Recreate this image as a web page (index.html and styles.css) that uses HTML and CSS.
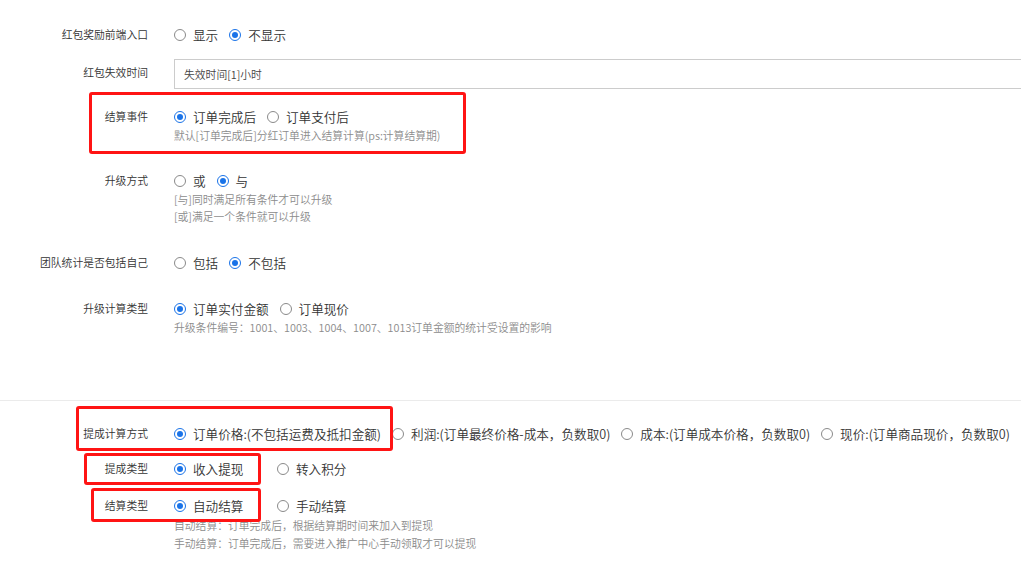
FILE: index.html
```html
<!DOCTYPE html>
<html lang="zh-CN">
<head>
<meta charset="utf-8">
<title>设置</title>
<link rel="stylesheet" href="styles.css">
</head>
<body>
<div class="page">
  <div class="row r1">
    <div class="label">红包奖励前端入口</div>
    <div class="field">
      <div class="opts">
        <span class="opt"><span class="radio"></span>显示</span>
        <span class="opt"><span class="radio on"></span>不显示</span>
      </div>
    </div>
  </div>

  <div class="row r2">
    <div class="label tall">红包失效时间</div>
    <div class="field">
      <div class="input">失效时间[1]小时</div>
    </div>
  </div>

  <div class="row r3">
    <div class="label">结算事件</div>
    <div class="field">
      <div class="opts">
        <span class="opt"><span class="radio on"></span>订单完成后</span>
        <span class="opt"><span class="radio"></span>订单支付后</span>
      </div>
      <div class="help">默认[订单完成后]分红订单进入结算计算(ps:计算结算期)</div>
    </div>
  </div>

  <div class="row r4">
    <div class="label">升级方式</div>
    <div class="field">
      <div class="opts">
        <span class="opt"><span class="radio"></span>或</span>
        <span class="opt"><span class="radio on"></span>与</span>
      </div>
      <div class="help">[与]同时满足所有条件才可以升级</div>
      <div class="help">[或]满足一个条件就可以升级</div>
    </div>
  </div>

  <div class="row r5">
    <div class="label">团队统计是否包括自己</div>
    <div class="field">
      <div class="opts">
        <span class="opt"><span class="radio"></span>包括</span>
        <span class="opt"><span class="radio on"></span>不包括</span>
      </div>
    </div>
  </div>

  <div class="row r6">
    <div class="label">升级计算类型</div>
    <div class="field">
      <div class="opts">
        <span class="opt"><span class="radio on"></span>订单实付金额</span>
        <span class="opt"><span class="radio"></span>订单现价</span>
      </div>
      <div class="help">升级条件编号：1001、1003、1004、1007、1013订单金额的统计受设置的影响</div>
    </div>
  </div>

  <div class="sep"></div>

  <div class="row r7">
    <div class="label">提成计算方式</div>
    <div class="field">
      <div class="opts">
        <span class="opt"><span class="radio on"></span>订单价格:(不包括运费及抵扣金额)</span>
        <span class="opt"><span class="radio"></span>利润:(订单最终价格-成本，负数取0)</span>
        <span class="opt"><span class="radio"></span>成本:(订单成本价格，负数取0)</span>
        <span class="opt"><span class="radio"></span>现价:(订单商品现价，负数取0)</span>
      </div>
    </div>
  </div>

  <div class="row r8">
    <div class="label">提成类型</div>
    <div class="field">
      <div class="opts">
        <span class="opt wide"><span class="radio on"></span>收入提现</span>
        <span class="opt"><span class="radio"></span>转入积分</span>
      </div>
    </div>
  </div>

  <div class="row r9">
    <div class="label">结算类型</div>
    <div class="field">
      <div class="opts">
        <span class="opt wide"><span class="radio on"></span>自动结算</span>
        <span class="opt"><span class="radio"></span>手动结算</span>
      </div>
      <div class="help h18">自动结算：订单完成后，根据结算期时间来加入到提现</div>
      <div class="help h18">手动结算：订单完成后，需要进入推广中心手动领取才可以提现</div>
    </div>
  </div>

  <div class="mark m1"></div>
  <div class="mark m2"></div>
  <div class="mark m3"></div>
  <div class="mark m4"></div>
</div>
</body>
</html>
```

FILE: styles.css
```css
html, body {
  margin: 0;
  padding: 0;
  background: #fff;
  overflow: hidden;
}
body {
  font-family: "Noto Sans CJK SC", "Liberation Sans", sans-serif;
  font-weight: 350;
  color: #333;
}
.page {
  position: relative;
  width: 1021px;
  height: 575px;
  padding-top: 25px;
  box-sizing: border-box;
}
.row {
  display: flex;
  align-items: flex-start;
}
.label {
  width: 148px;
  flex: none;
  text-align: right;
  font-size: 10.8px;
  line-height: 18px;
  color: #333;
  padding-right: 26px;
  box-sizing: content-box;
}
.label.tall {
  line-height: 26px;
}
.field {
  flex: 1;
  min-width: 0;
}
.opts {
  display: flex;
  align-items: center;
  height: 20px;
  white-space: nowrap;
}
.opt {
  display: inline-flex;
  align-items: center;
  font-size: 12.6px;
  line-height: 20px;
  color: #333;
  margin-right: 11px;
}
.opt.wide {
  width: 103px;
  margin-right: 0;
}
.radio {
  width: 12px;
  height: 12px;
  box-sizing: border-box;
  border: 1px solid #8a8a8a;
  border-radius: 50%;
  margin-right: 7px;
  flex: none;
  position: relative;
  background: #fff;
}
.radio.on {
  border: 1.5px solid #1a73e8;
}
.radio.on::after {
  content: "";
  position: absolute;
  left: 50%;
  top: 50%;
  width: 6px;
  height: 6px;
  margin: -3px 0 0 -3px;
  border-radius: 50%;
  background: #1a73e8;
}
.help {
  font-size: 10.8px;
  line-height: 17px;
  color: #8c8c8c;
  white-space: nowrap;
}
.help.h18 {
  line-height: 18px;
}
.input {
  width: 880px;
  height: 30px;
  box-sizing: border-box;
  border: 1px solid #ccc;
  padding-left: 9px;
  font-size: 10.8px;
  line-height: 28px;
  color: #444;
}
.r2 { margin-top: 14px; }
.r3 { margin-top: 18px; }
.r4 { margin-top: 27px; }
.r5 { margin-top: 28px; }
.r6 { margin-top: 26px; }
.sep {
  margin-top: 64px;
  height: 1px;
  background: #ebebeb;
}
.r7 { margin-top: 23px; }
.r8 { margin-top: 15px; }
.r9 { margin-top: 17px; }

.mark {
  position: absolute;
  border: 3px solid #ff1414;
  border-radius: 3px;
  box-sizing: border-box;
}
.m1 { left: 89px; top: 92px; width: 377px; height: 62px; }
.m2 { left: 76px; top: 406px; width: 317px; height: 45px; }
.m3 { left: 84px; top: 453px; width: 177px; height: 32px; }
.m4 { left: 91px; top: 488px; width: 170px; height: 34px; }
```
